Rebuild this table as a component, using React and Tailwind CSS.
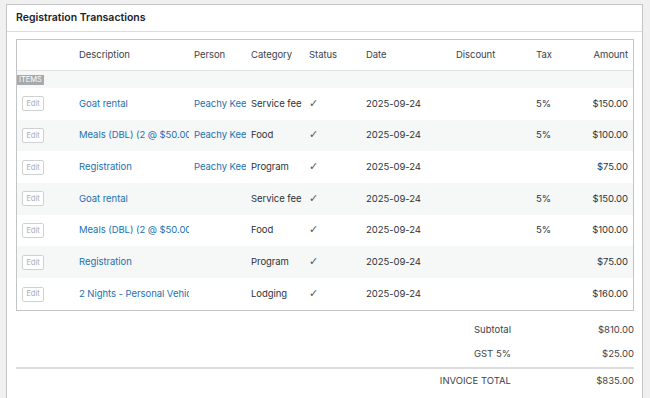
import React from "react";

const rows = [
  { d: "Goat rental", p: "Peachy Keen", c: "Service fee", t: "5%", a: "$150.00" },
  { d: "Meals (DBL) (2 @ $50.00)", p: "Peachy Keen", c: "Food", t: "5%", a: "$100.00" },
  { d: "Registration", p: "Peachy Keen", c: "Program", t: "", a: "$75.00" },
  { d: "Goat rental", p: "", c: "Service fee", t: "5%", a: "$150.00" },
  { d: "Meals (DBL) (2 @ $50.00)", p: "", c: "Food", t: "5%", a: "$100.00" },
  { d: "Registration", p: "", c: "Program", t: "", a: "$75.00" },
  { d: "2 Nights - Personal Vehicle", p: "", c: "Lodging", t: "", a: "$160.00" },
];

const cell = "pl-[5px] overflow-hidden whitespace-nowrap";

export default function App() {
  return (
    <div
      className="w-[650px] h-[398px] overflow-hidden bg-[#f0f0f1] pl-[6px] pt-[4px] pr-[7px]"
      style={{ fontFamily: "Inter, 'Liberation Sans', sans-serif" }}
    >
      <div className="bg-white border border-[#c3c4c7] h-[420px]">
        <div className="h-[27px] border-b border-[#dcdcde] flex items-center pl-[9px]">
          <h2 className="text-[10.5px] font-semibold text-[#1d2327]">Registration Transactions</h2>
        </div>
        <div className="pl-[9px] pr-[8px] pt-[7px]">
          <div className="border border-[#c3c4c7]">
            <table className="w-full table-fixed border-collapse text-[9.5px] tracking-[-0.05px] text-[#2c3338]">
              <colgroup>
                <col className="w-[57px]" />
                <col className="w-[115px]" />
                <col className="w-[57px]" />
                <col className="w-[58px]" />
                <col className="w-[57px]" />
                <col className="w-[90px]" />
                <col className="w-[80px]" />
                <col className="w-[50px]" />
                <col className="w-[52px]" />
              </colgroup>
              <thead>
                <tr className="h-[30px] border-b border-[#e2e3e4] text-[#3c434a]">
                  <th className={cell + " font-normal text-left"}></th>
                  <th className={cell + " font-normal text-left"}>Description</th>
                  <th className={cell + " font-normal text-left"}>Person</th>
                  <th className={cell + " font-normal text-left"}>Category</th>
                  <th className={cell + " font-normal text-left"}>Status</th>
                  <th className={cell + " font-normal text-left"}>Date</th>
                  <th className={cell + " font-normal text-left"}>Discount</th>
                  <th className={cell + " font-normal text-left"}>Tax</th>
                  <th className="pr-[5px] font-normal text-right whitespace-nowrap">Amount</th>
                </tr>
              </thead>
              <tbody>
                <tr className="h-[18px] bg-[#f6f7f7]">
                  <td colSpan={9} className="align-middle">
                    <span className="inline-block bg-[#a7aaad] text-white text-[7.5px] leading-[10px] px-[2px] uppercase">
                      Items
                    </span>
                  </td>
                </tr>
                {rows.map((r, i) => (
                  <tr key={i} className={"h-[31.7px] " + (i % 2 === 1 ? "bg-[#f6f7f7]" : "bg-white")}>
                    <td className={cell}>
                      <span className="inline-flex items-center justify-center w-[22px] h-[15px] border border-[#d0d1d3] rounded-[2px] bg-white text-[7.5px] text-[#a7aaad]">
                        Edit
                      </span>
                    </td>
                    <td className={cell + " text-[#2271b1]"}>{r.d}</td>
                    <td className={cell + " text-[#2271b1]"}>{r.p}</td>
                    <td className={cell}>{r.c}</td>
                    <td className={cell + " text-[#50575e]"} style={{ fontFamily: "'DejaVu Sans', sans-serif" }}>
                      <span className="text-[11px]">✓</span>
                    </td>
                    <td className={cell}>2025-09-24</td>
                    <td className={cell}></td>
                    <td className={cell}>{r.t}</td>
                    <td className="pr-[5px] text-right whitespace-nowrap">{r.a}</td>
                  </tr>
                ))}
              </tbody>
            </table>
          </div>
          <div className="text-[9.5px] text-[#3c434a]">
            <div className="flex h-[31px] pt-[7px] items-center">
              <div className="w-[495px] text-right">Subtotal</div>
              <div className="flex-1 text-right">$810.00</div>
            </div>
            <div className="flex h-[25px] items-center">
              <div className="w-[495px] text-right">GST 5%</div>
              <div className="flex-1 text-right">$25.00</div>
            </div>
            <div className="flex h-[26px] items-center border-t-2 border-[#dcdcde]">
              <div className="w-[495px] text-right">INVOICE TOTAL</div>
              <div className="flex-1 text-right">$835.00</div>
            </div>
          </div>
        </div>
      </div>
    </div>
  );
}
